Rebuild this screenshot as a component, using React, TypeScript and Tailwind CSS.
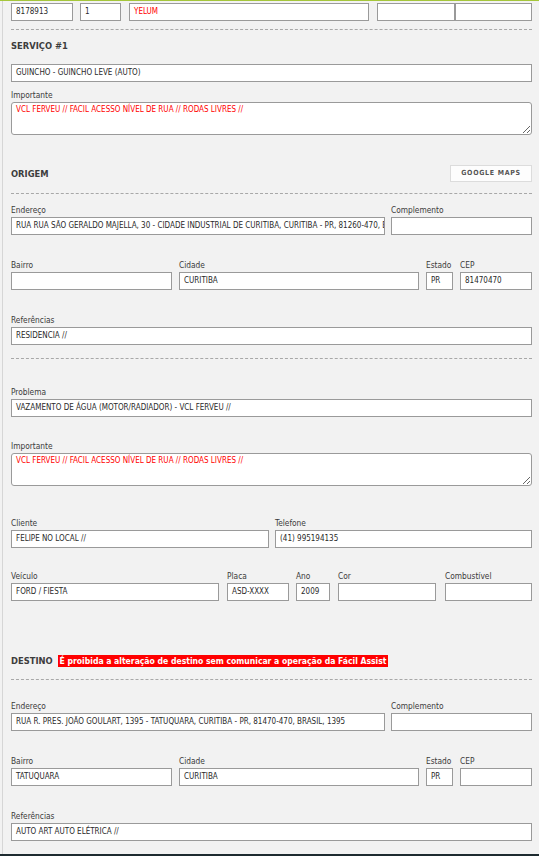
import React from "react";

function Label({ children }: { children?: React.ReactNode }) {
  return (
    <div className="h-[13px] text-[8.3px] leading-[12px] text-[#3a3a3a] whitespace-nowrap">
      {children}
    </div>
  );
}

function Box({ value = "", red = false }: { value?: string; red?: boolean }) {
  return (
    <div
      className={
        "h-[18px] border border-[#9a9a9a] bg-white pl-[4px] flex items-center overflow-hidden whitespace-nowrap text-[8px] leading-[12px] " +
        (red ? "text-[#f00]" : "text-[#2a2a2a]")
      }
    >
      {value}
    </div>
  );
}

function Field({
  label,
  value = "",
  className = "",
  red = false,
}: {
  label?: string;
  value?: string;
  className?: string;
  red?: boolean;
}) {
  return (
    <div className={className}>
      {label !== undefined && <Label>{label}</Label>}
      <Box value={value} red={red} />
    </div>
  );
}

function Area({ value, className = "" }: { value: string; className?: string }) {
  return (
    <div className={className}>
      <Label>Importante</Label>
      <textarea
        readOnly
        value={value}
        className="block w-full h-[33px] border border-[#9a9a9a] rounded-[3px] bg-white px-[4px] pt-[2px] text-[8px] leading-[10px] text-[#f00] outline-none font-['DejaVu_Sans_Condensed','DejaVu_Sans',sans-serif]"
      />
    </div>
  );
}

function Dashed({ className = "" }: { className?: string }) {
  return <div className={"border-t border-dashed border-[#a8a8a8] " + className} />;
}

export default function App() {
  const imp = "VCL FERVEU // FACIL ACESSO NÍVEL DE RUA // RODAS LIVRES //";
  return (
    <div className="w-full h-[856px] overflow-hidden bg-[#f2f2f2] flex flex-col font-['DejaVu_Sans_Condensed','DejaVu_Sans',sans-serif]">
      <div className="h-px bg-[#a5c63b] shrink-0" />
      <div className="flex-1 ml-[2px] border-l border-[#d6d6d6] pl-[8px] pr-[7px] overflow-hidden">
        {/* Top row */}
        <div className="mt-[2px] flex">
          <Field value="8178913" className="w-[62px]" />
          <Field value="1" className="w-[41px] ml-[7px]" />
          <Field value="YELUM" red className="w-[240px] ml-[8px]" />
          <Field value="" className="w-[78px] ml-[8px]" />
          <Field value="" className="w-[77px]" />
        </div>

        <Dashed className="mt-[8px]" />

        <div className="mt-[9px] h-[14px] leading-[14px] text-[9.3px] font-bold text-[#3d3d3d]">
          SERVIÇO #1
        </div>

        <Field value="GUINCHO - GUINCHO LEVE (AUTO)" className="mt-[11px]" />

        <Area value={imp} className="mt-[7px]" />

        {/* ORIGEM */}
        <div className="mt-[30px] flex items-center justify-between h-[17px]">
          <div className="text-[9.3px] font-bold text-[#3d3d3d] leading-[14px]">ORIGEM</div>
          <div className="w-[82px] h-[17px] border border-[#dcdcdc] bg-[#fdfdfd] text-[7px] font-bold tracking-[0.7px] text-[#555] flex items-center justify-center">
            GOOGLE MAPS
          </div>
        </div>

        <Dashed className="mt-[11px]" />

        <div className="mt-[10px] flex">
          <Field
            label="Endereço"
            value="RUA RUA SÃO GERALDO MAJELLA, 30 - CIDADE INDUSTRIAL DE CURITIBA, CURITIBA - PR, 81260-470, BRASIL, 30"
            className="w-[374px]"
          />
          <Field label="Complemento" className="w-[141px] ml-[6px]" />
        </div>

        <div className="mt-[24px] flex">
          <Field label="Bairro" className="w-[161px]" />
          <Field label="Cidade" value="CURITIBA" className="w-[240px] ml-[7px]" />
          <Field label="Estado" value="PR" className="w-[27px] ml-[7px]" />
          <Field label="CEP" value="81470470" className="w-[72px] ml-[7px]" />
        </div>

        <Field label="Referências" value="RESIDENCIA //" className="mt-[24px]" />

        <Dashed className="mt-[13px]" />

        <Field
          label="Problema"
          value="VAZAMENTO DE ÁGUA (MOTOR/RADIADOR) - VCL FERVEU //"
          className="mt-[27px]"
        />

        <Area value={imp} className="mt-[23px]" />

        <div className="mt-[31px] flex">
          <Field label="Cliente" value="FELIPE NO LOCAL //" className="w-[258px]" />
          <Field label="Telefone" value="(41) 995194135" className="w-[257px] ml-[6px]" />
        </div>

        <div className="mt-[22px] flex">
          <Field label="Veículo" value="FORD / FIESTA" className="w-[208px]" />
          <Field label="Placa" value="ASD-XXXX" className="w-[62px] ml-[8px]" />
          <Field label="Ano" value="2009" className="w-[34px] ml-[7px]" />
          <Field label="Cor" className="w-[98px] ml-[8px]" />
          <Field label="Combustível" className="w-[87px] ml-[9px]" />
        </div>

        {/* DESTINO */}
        <div className="mt-[53px] h-[14px] flex items-center">
          <div className="text-[9.3px] font-bold text-[#3d3d3d] leading-[14px]">DESTINO</div>
          <div className="ml-[5px] h-[12px] bg-[#ff0000] text-white font-bold text-[8.55px] leading-[12px] px-[2px] whitespace-nowrap">
            É proibida a alteração de destino sem comunicar a operação da Fácil Assist
          </div>
        </div>

        <Dashed className="mt-[11px]" />

        <div className="mt-[20px] flex">
          <Field
            label="Endereço"
            value="RUA R. PRES. JOÃO GOULART, 1395 - TATUQUARA, CURITIBA - PR, 81470-470, BRASIL, 1395"
            className="w-[374px]"
          />
          <Field label="Complemento" className="w-[141px] ml-[6px]" />
        </div>

        <div className="mt-[24px] flex">
          <Field label="Bairro" value="TATUQUARA" className="w-[161px]" />
          <Field label="Cidade" value="CURITIBA" className="w-[240px] ml-[7px]" />
          <Field label="Estado" value="PR" className="w-[27px] ml-[7px]" />
          <Field label="CEP" className="w-[72px] ml-[7px]" />
        </div>

        <Field label="Referências" value="AUTO ART AUTO ELÉTRICA //" className="mt-[24px]" />
      </div>
      <div className="h-[2px] bg-[#1e2b30] shrink-0" />
    </div>
  );
}
